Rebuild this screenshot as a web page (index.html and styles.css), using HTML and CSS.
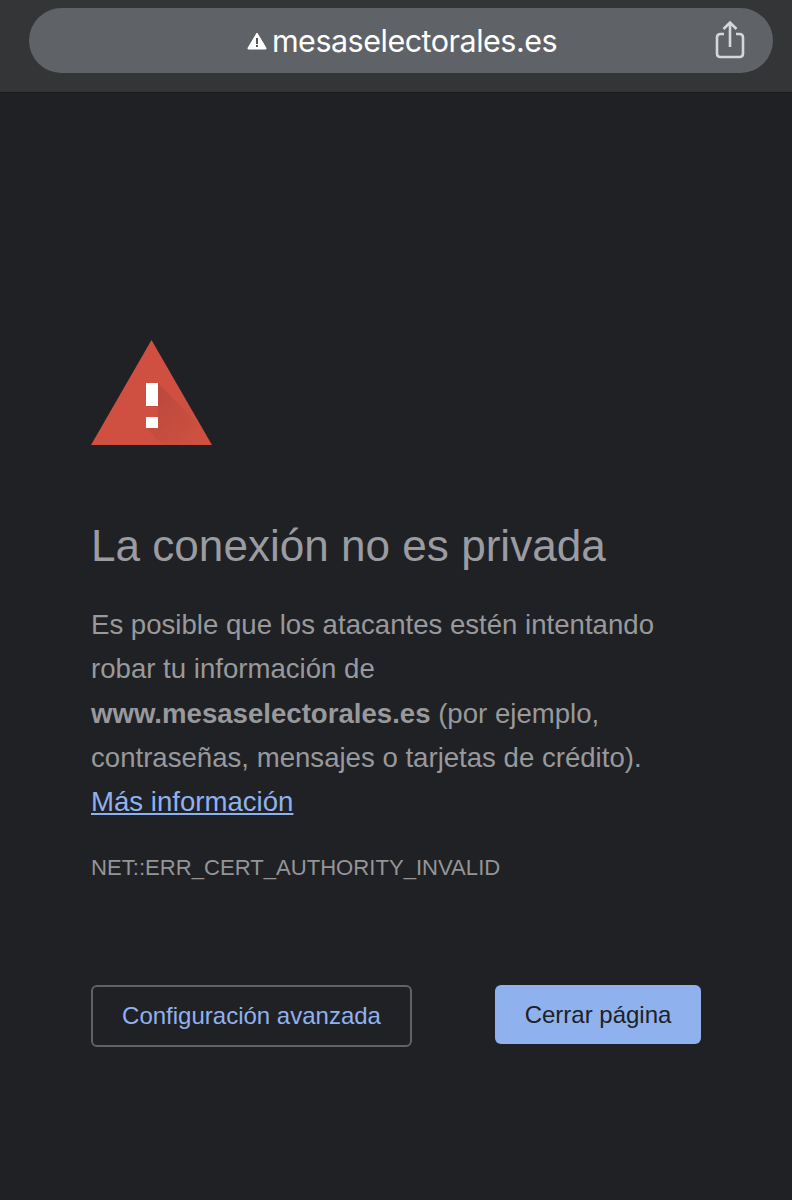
FILE: index.html
```html
<!DOCTYPE html>
<html lang="es">
<head>
<meta charset="utf-8">
<title>La conexión no es privada</title>
<link rel="stylesheet" href="styles.css">
</head>
<body>
<header class="toolbar">
  <div class="address">
    <div class="domain">
      <svg class="warn" viewBox="0 0 20 18" width="20" height="18" aria-hidden="true">
        <path d="M10 1 L19 16 Q19.4 17 18.4 17 L1.600 17 Q.6 17 1 16 Z" fill="#fff" stroke="#fff" stroke-width="1" stroke-linejoin="round"/>
        <rect x="9" y="6" width="2" height="6" fill="#55575b"/>
        <rect x="9" y="13" width="2" height="2" fill="#55575b"/>
      </svg>
      <span class="url">mesaselectorales.es</span>
    </div>
    <svg class="share" viewBox="0 0 32 40" width="32" height="40" aria-hidden="true">
      <path d="M10 14 H6.500 Q3 14 3 17.500 V33.500 Q3 37 6.500 37 H25.500 Q29 37 29 33.500 V17.500 Q29 14 25.500 14 H22" fill="none" stroke="#d6d7d8" stroke-width="2.600"/>
      <path d="M16 27 V3 M9.500 9 L16 2.500 L22.500 9" fill="none" stroke="#d6d7d8" stroke-width="2.600"/>
    </svg>
  </div>
</header>
<main class="page">
  <svg class="alert" viewBox="0 0 121 105" width="121" height="105" aria-hidden="true">
    <defs>
      <linearGradient id="shade" x1="0.2" y1="0.2" x2="0.85" y2="0.85">
        <stop offset="0" stop-color="#a8433a" stop-opacity=".5"/>
        <stop offset="1" stop-color="#a8433a" stop-opacity="0"/>
      </linearGradient>
    </defs>
    <path d="M60.500 0 L121 105 H0 Z" fill="#cf5040"/>
    <path d="M67 43 L112 89 L121 105 H72 L55 88 V77 H67 Z" fill="url(#shade)"/>
    <rect x="55" y="43" width="12" height="23" fill="#fff"/>
    <rect x="55" y="77" width="12" height="11" fill="#fff"/>
  </svg>
  <h1 class="title">La conexión no es privada</h1>
  <p class="message">Es posible que los atacantes estén intentando robar tu información de <strong>www.mesaselectorales.es</strong> (por ejemplo, contraseñas, mensajes o tarjetas de crédito). <a class="link" href="#">Más información</a></p>
  <p class="code">NET::ERR_CERT_AUTHORITY_INVALID</p>
  <div class="actions">
    <button class="btn btn-outline" type="button">Configuración avanzada</button>
    <button class="btn btn-primary" type="button">Cerrar página</button>
  </div>
</main>
</body>
</html>
```
FILE: styles.css
```css
* { box-sizing: border-box; }
html, body { margin: 0; height: 100%; }
body {
  background: #202124;
  font-family: "Liberation Sans", Arial, sans-serif;
  color: #98999d;
  overflow: hidden;
}
.toolbar {
  height: 93px;
  padding: 8px 19px 0 29px;
  background: #343537;
  border-bottom: 1px solid #18191b;
}
.address {
  position: relative;
  height: 65px;
  border-radius: 33px;
  background: #5f6266;
  display: flex;
  align-items: center;
  justify-content: center;
}
.domain {
  display: flex;
  align-items: center;
  gap: 5px;
  margin-left: 2px;
}
.url {
  font-family: Inter, sans-serif;
  font-size: 30.500px;
  color: #fff;
  letter-spacing: -0.500px;
  line-height: 36px;
}
.share {
  position: absolute;
  right: 27px;
  top: 12px;
}
.page { padding: 247px 91px 0; }
.alert { display: block; }
.title {
  margin: 75px 0 0;
  font-size: 44.100px;
  line-height: 52px;
  font-weight: 400;
  color: #9a9ca2;
}
.message {
  margin: 31px 0 0;
  width: 600px;
  font-size: 27.600px;
  line-height: 44.300px;
}
.message strong { font-weight: 700; }
.link { color: #8fb2ef; text-decoration: underline; }
.code {
  margin: 26px 0 0;
  font-size: 22.100px;
  line-height: 36px;
  color: #949597;
}
.actions {
  margin-top: 99px;
  display: flex;
  justify-content: space-between;
  align-items: flex-start;
  width: 610px;
}
.btn {
  font-family: "Liberation Sans", Arial, sans-serif;
  font-size: 24px;
  border-radius: 6px;
  padding: 0;
}
.btn-outline {
  width: 321px;
  height: 62px;
  background: transparent;
  border: 2px solid #5f6368;
  color: #8fb2ef;
}
.btn-primary {
  width: 206px;
  height: 59px;
  background: #8fb2ef;
  border: 0;
  color: #202124;
}
```
